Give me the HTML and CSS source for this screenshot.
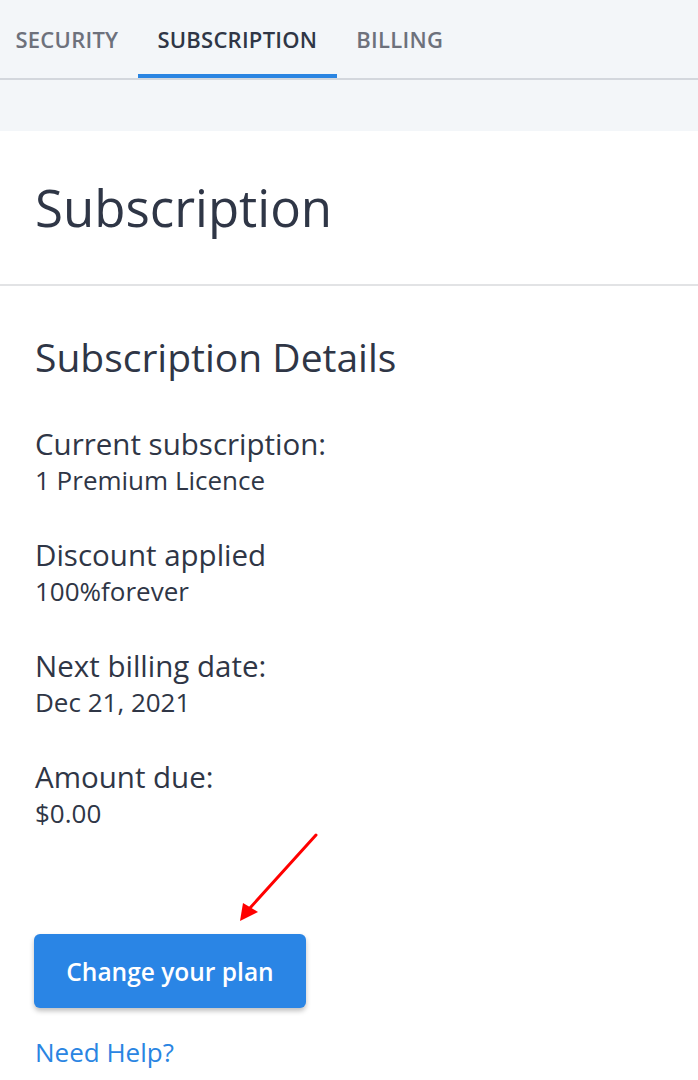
FILE: index.html
```html
<!DOCTYPE html>
<html lang="en">
<head>
<meta charset="utf-8">
<title>Subscription</title>
<link rel="stylesheet" href="styles.css">
</head>
<body>
<div class="top">
  <nav class="tabs">
    <a class="tab">SECURITY</a>
    <a class="tab active">SUBSCRIPTION</a>
    <a class="tab">BILLING</a>
  </nav>
  <div class="band"></div>
</div>
<main class="card">
  <header class="card-head">
    <h1 class="title">Subscription</h1>
  </header>
  <section class="details">
    <h2 class="subtitle">Subscription Details</h2>
    <div class="fields">
      <div class="field">
        <div class="label">Current subscription:</div>
        <div class="value">1 Premium Licence</div>
      </div>
      <div class="field">
        <div class="label">Discount applied</div>
        <div class="value">100%forever</div>
      </div>
      <div class="field">
        <div class="label">Next billing date:</div>
        <div class="value">Dec 21, 2021</div>
      </div>
      <div class="field">
        <div class="label">Amount due:</div>
        <div class="value">$0.00</div>
      </div>
    </div>
    <div class="actions">
      <button class="btn">Change your plan</button>
      <svg class="arrow" width="100" height="100" viewBox="0 0 100 100">
        <line x1="86" y1="5" x2="20" y2="78" stroke="#ff0000" stroke-width="3" stroke-linecap="round"/>
        <polygon points="10,91 13,73 28,82" fill="#ff0000"/>
      </svg>
    </div>
    <a class="help">Need Help?</a>
  </section>
</main>
</body>
</html>
```

FILE: styles.css
```css
* { box-sizing: border-box; }
html, body { margin: 0; padding: 0; background: #ffffff; }
body {
  font-family: "Open Sans", "Noto Sans", sans-serif;
  color: #2f3646;
  width: 698px;
  height: 1080px;
  overflow: hidden;
}
.top { background: #f3f6f9; }
.tabs {
  display: flex;
  height: 80px;
  border-bottom: 2px solid #d3d7dd;
  margin-left: -4px;
}
.tab {
  display: flex;
  align-items: center;
  padding: 4px 19.5px 0;
  font-size: 22px;
  font-weight: 600;
  letter-spacing: 0.25px;
  color: #6d717c;
  height: 78px;
  border-bottom: 4px solid transparent;
}
.tab.active {
  color: #2f3646;
  border-bottom-color: #2a85e2;
}
.band { height: 51px; }
.card-head {
  padding: 44px 35px 45px;
  border-bottom: 2px solid #e2e3e5;
}
.title {
  margin: 0;
  font-size: 51px;
  line-height: 64px;
  font-weight: 400;
}
.details { padding: 47px 35px 0; }
.subtitle {
  margin: 0;
  font-size: 39px;
  line-height: 48px;
  font-weight: 400;
}
.fields {
  display: flex;
  flex-direction: column;
  gap: 40px;
  margin-top: 45px;
}
.field { display: flex; flex-direction: column; gap: 1px; }
.label { font-size: 29.5px; line-height: 36px; }
.value { font-size: 26px; line-height: 34px; }
.actions {
  position: relative;
  margin-top: 104px;
}
.btn {
  display: block;
  width: 272px;
  height: 74px;
  margin-left: -1px;
  border: none;
  border-radius: 6px;
  background: #2a85e5;
  color: #ffffff;
  font-family: "Open Sans", "Noto Sans", sans-serif;
  font-size: 24.5px;
  font-weight: 600;
  box-shadow: 0 3px 5px rgba(0, 0, 0, 0.25);
  padding: 0;
}
.arrow {
  position: absolute;
  left: 195px;
  top: -104px;
}
.help {
  display: block;
  margin-top: 28px;
  font-size: 26px;
  line-height: 32px;
  color: #2a85e2;
}
```
